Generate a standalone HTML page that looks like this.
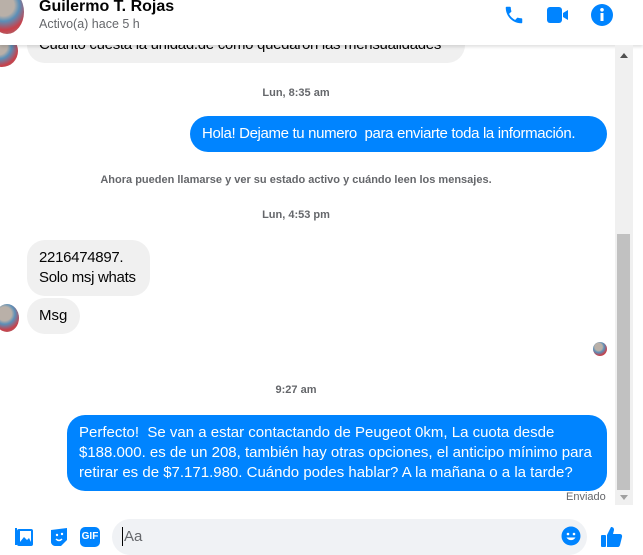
<!DOCTYPE html>
<html><head><meta charset="utf-8"><style>
*{margin:0;padding:0;box-sizing:border-box}
body{width:643px;height:549px;overflow:hidden;background:#fff;font-family:"Liberation Sans",Arial,sans-serif;position:relative;color:#050505}
.a{position:absolute}
.av{position:absolute;border-radius:50%;background:radial-gradient(circle at 40% 35%,#b9b0a8 0 30%,#5a8fb8 45%,#c8404a 70%,#9a8080 100%)}
.bg{position:absolute;background:#f0f0f0;border-radius:18px;font-size:15px;line-height:20px;padding:8px 12px;white-space:nowrap}
.bb{position:absolute;background:#0084ff;color:#fff;border-radius:18px;font-size:15px;line-height:20px;padding:8px 12px;white-space:nowrap}
.ts{position:absolute;font-size:11px;color:#65676b;font-weight:bold;text-align:center;width:592px;left:0}
</style></head><body>
<div class="bg" style="left:27px;top:27px;width:438px;height:36px;line-height:18px;padding-top:9px;overflow:hidden;letter-spacing:-0.3px">Cuanto cuesta la unidad.de como quedaron las mensualidades</div>
<div class="av" style="left:-14px;top:35px;width:32px;height:32px"></div>
<div class="a" style="left:0;top:0;width:643px;height:45px;background:#fff;box-shadow:0 2px 3px rgba(0,0,0,.12)"></div>
<div class="av" style="left:-10px;top:-10px;width:34px;height:44px"></div>
<div class="a" style="left:39px;top:-2px;font-size:16px;font-weight:bold;color:#050505">Guilermo T. Rojas</div>
<div class="a" style="left:39px;top:17px;font-size:12.5px;color:#65676b">Activo(a) hace 5 h</div>
<svg class="a" style="left:503px;top:4px" width="22" height="22" viewBox="0 0 24 24"><path fill="#0084ff" d="M6.6 10.8c1.4 2.8 3.8 5.1 6.6 6.6l2.2-2.2c.3-.3.7-.4 1-.2 1.1.4 2.3.6 3.6.6.6 0 1 .4 1 1V20c0 .6-.4 1-1 1C10.6 21 3 13.4 3 4c0-.6.4-1 1-1h3.5c.6 0 1 .4 1 1 0 1.300.2 2.5.6 3.6.1.3 0 .7-.2 1z"/></svg>
<svg class="a" style="left:546px;top:5px" width="24" height="20" viewBox="0 0 24 20"><rect x="1" y="2" width="15" height="16" rx="3" fill="#0084ff"/><path d="M17 8l5-3v10l-5-3z" fill="#0084ff"/></svg>
<svg class="a" style="left:590px;top:3px" width="24" height="24" viewBox="0 0 24 24"><circle cx="12" cy="12" r="11" fill="#0084ff"/><rect x="10.5" y="10" width="3" height="8" fill="#fff"/><circle cx="12" cy="6.8" r="1.8" fill="#fff"/></svg>
<div class="a" style="left:615px;top:45px;width:18px;height:460px;background:#f0f0f0"></div>
<div class="a" style="left:617px;top:234px;width:13px;height:256px;background:#c1c1c1"></div>
<div class="a" style="left:620px;top:53px;width:0;height:0;border:4px solid transparent;border-bottom:5px solid #505050;border-top:0"></div>
<div class="a" style="left:620px;top:495px;width:0;height:0;border:4px solid transparent;border-top:5px solid #a0a0a0;border-bottom:0"></div>
<div class="ts" style="top:87px">Lun, 8:35 am</div>
<div class="bb" style="left:190px;top:116px;width:417px;height:36px;letter-spacing:-0.35px">Hola! Dejame tu numero&nbsp; para enviarte toda la información.</div>
<div class="ts" style="top:174px">Ahora pueden llamarse y ver su estado activo y cuándo leen los mensajes.</div>
<div class="ts" style="top:209px">Lun, 4:53 pm</div>
<div class="bg" style="left:27px;top:240px;width:123px;height:56px;letter-spacing:-0.3px">2216474897.<br>Solo msj whats</div>
<div class="bg" style="left:27px;top:298px;width:53px;height:36px">Msg</div>
<div class="av" style="left:-5px;top:304px;width:24px;height:28px"></div>
<div class="av" style="left:593px;top:342px;width:14px;height:14px"></div>
<div class="ts" style="top:384px">9:27 am</div>
<div class="bb" style="left:67px;top:415px;width:540px;height:76px">Perfecto!&nbsp; Se van a estar contactando de Peugeot 0km, La cuota desde<br>$188.000. es de un 208, también hay otras opciones, el anticipo mínimo para<br>retirar es de $7.171.980. Cuándo podes hablar? A la mañana o a la tarde?</div>
<div class="a" style="left:566px;top:491px;font-size:11px;color:#65676b">Enviado</div>
<svg class="a" style="left:-6px;top:527px" width="12" height="20"><circle cx="0" cy="10" r="6" fill="#0084ff"/></svg>
<svg class="a" style="left:14px;top:526px" width="22" height="22" viewBox="0 0 22 22"><rect x="3" y="3" width="16" height="17" rx="2" fill="#0084ff"/><rect x="6" y="5" width="11" height="11" fill="#fff"/><path d="M6 16l4-5 3 3 2-2 2 4z" fill="#0084ff"/><rect x="1" y="2" width="2" height="17" fill="#0084ff"/></svg>
<svg class="a" style="left:48px;top:526px" width="22" height="22" viewBox="0 0 22 22"><path d="M3 4l16-2v12l-6 6H7c-2 0-4-2-4-4z" fill="#0084ff"/><circle cx="9" cy="9" r="1.2" fill="#fff"/><circle cx="14" cy="8" r="1.2" fill="#fff"/><path d="M8 13c2 2 4 2 6 0" stroke="#fff" stroke-width="1.5" fill="none"/></svg>
<div class="a" style="left:80px;top:527px;width:20px;height:20px;border-radius:5px;background:#0084ff;color:#fff;font-size:10px;font-weight:bold;line-height:20px;text-align:center">GIF</div>
<div class="a" style="left:112px;top:519px;height:36px;border-radius:18px;background:#f0f2f5;width:475px"></div>
<div class="a" style="left:122px;top:527px;width:1px;height:19px;background:#000"></div>
<div class="a" style="left:124px;top:528px;font-size:15px;color:#65676b">Aa</div>
<svg class="a" style="left:561px;top:526px" width="20" height="20" viewBox="0 0 20 20"><circle cx="10" cy="10" r="9.5" fill="#0084ff"/><circle cx="7" cy="8" r="1.3" fill="#fff"/><circle cx="13" cy="8" r="1.3" fill="#fff"/><path d="M5.5 11.5c2 3.5 7 3.5 9 0z" fill="#fff"/></svg>
<svg class="a" style="left:600px;top:524px" width="24" height="24" viewBox="0 0 24 24"><rect x="1" y="11" width="5" height="12" rx="1" fill="#0084ff"/><path d="M7 11l4-8c2 0 3 1 3 3l-1 4h7c1.5 0 2.5 1.5 2 3l-2 8c-.3 1-1 2-2 2H7z" fill="#0084ff"/></svg>
</body></html>
